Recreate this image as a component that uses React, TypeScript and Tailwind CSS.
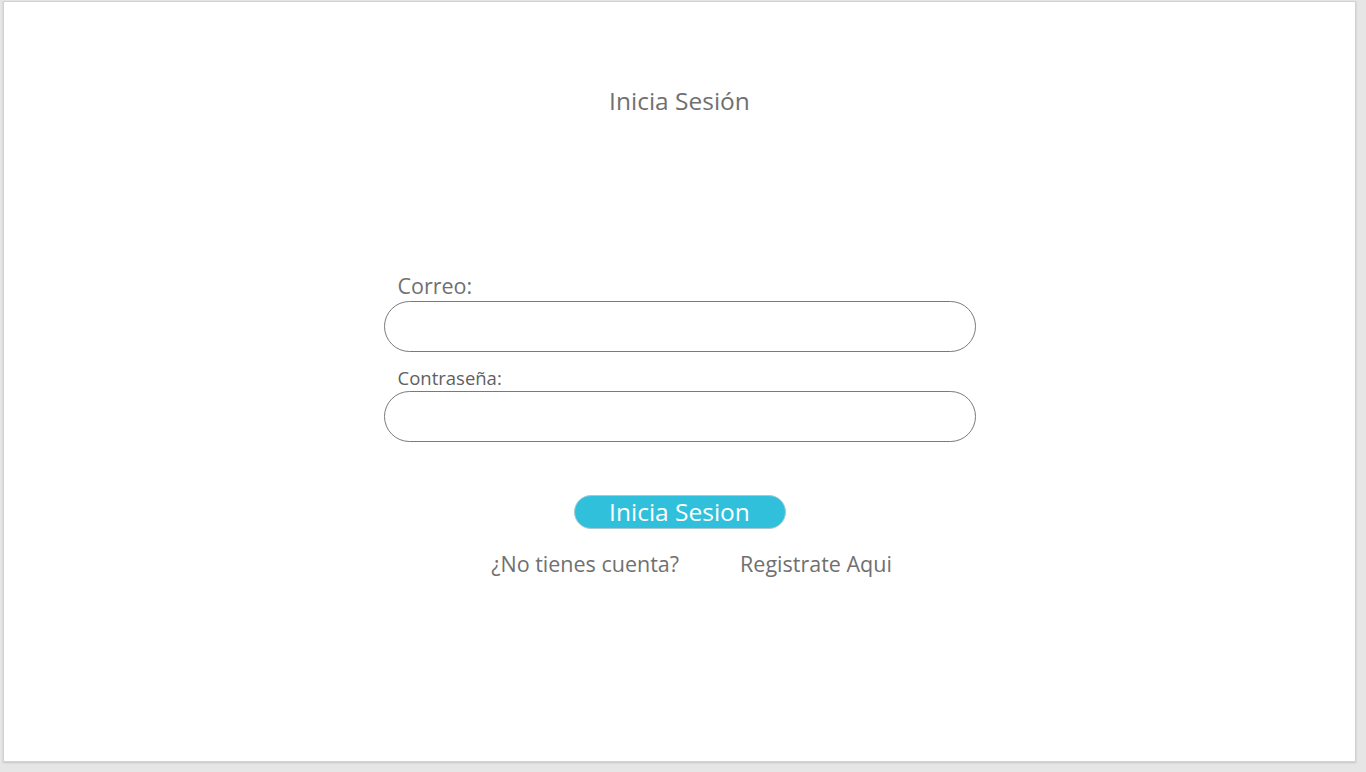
export default function App() {
  return (
    <div className="h-[772px] w-full bg-[#e6e6e6] pl-[3px] pt-[1px] pr-[10px] pb-[10px] font-['Open_Sans',sans-serif] text-[#707070]">
      <div className="h-full w-full bg-white border border-[#d2d2d2] shadow-[0_1px_2px_rgba(0,0,0,0.15)] flex flex-col items-center">
        <h1 className="mt-[83px] text-[24.5px] leading-[32px]">Inicia Sesión</h1>

        <form className="mt-[156px] w-[592px] flex flex-col" onSubmit={(e) => e.preventDefault()}>
          <label className="pl-[14px] text-[21.5px] leading-[26px]">Correo:</label>
          <input
            type="email"
            className="mt-[2px] h-[51px] w-full rounded-full border border-[#7a7a7a] outline-none px-5"
          />
          <label className="mt-[15px] pl-[14px] text-[18.5px] leading-[22px] text-[#5f5f5f]">Contraseña:</label>
          <input
            type="password"
            className="mt-[2px] h-[51px] w-full rounded-full border border-[#7a7a7a] outline-none px-5"
          />

          <button
            type="submit"
            className="mt-[53px] self-center h-[34px] w-[212px] rounded-full bg-[#31c0dc] border border-[#a9c9d2] text-white text-[24.5px] leading-[30px]"
          >
            Inicia Sesion
          </button>

          <div className="mt-[21px] pl-[24px] flex justify-center gap-[61px] text-[21.5px] leading-[28px]">
            <span>¿No tienes cuenta?</span>
            <a href="#" className="text-[#707070]">Registrate Aqui</a>
          </div>
        </form>
      </div>
    </div>
  );
}
